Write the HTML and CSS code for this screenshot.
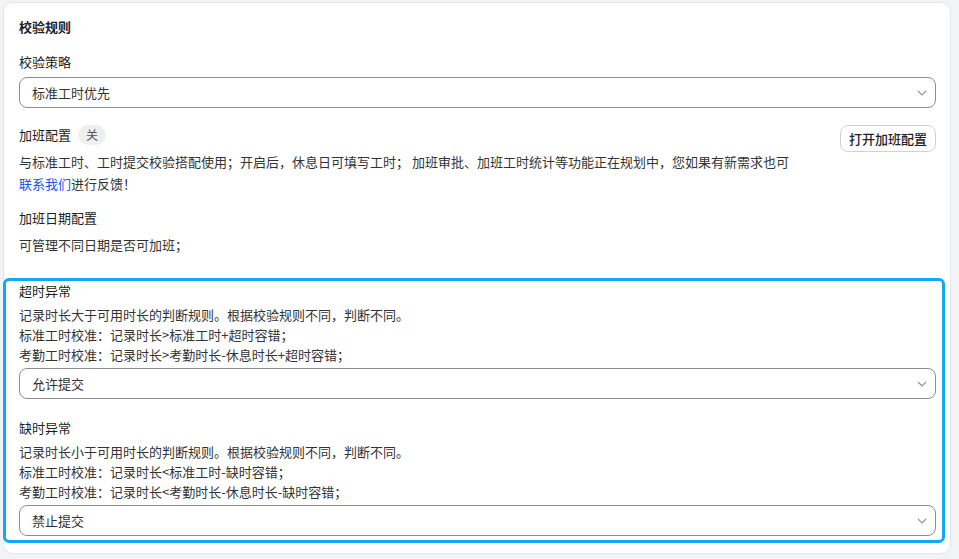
FILE: index.html
```html
<!DOCTYPE html>
<html lang="zh-CN">
<head>
    <meta charset="UTF-8">
    <meta name="viewport" content="width=device-width, initial-scale=1.0">
    <title>校验规则</title>
    <link rel="stylesheet" href="styles.css">
</head>
<body>
    <div class="card">
        <h2 class="card-title">校验规则</h2>

        <div class="field">
            <div class="field-label">校验策略</div>
            <div class="select">
                <span>标准工时优先</span>
                <svg class="chevron" width="10" height="6" viewBox="0 0 10 6"><polyline points="1,1 5,5 9,1" fill="none" stroke="#8f959e" stroke-width="1.2"/></svg>
            </div>
        </div>

        <div class="overtime">
            <div class="overtime-main">
                <div class="field-label">加班配置 <span class="tag">关</span></div>
                <p class="desc">与标准工时、工时提交校验搭配使用；开启后，休息日可填写工时； 加班审批、加班工时统计等功能正在规划中，您如果有新需求也可<a href="#" class="link">联系我们</a>进行反馈！</p>
            </div>
            <button class="btn">打开加班配置</button>
        </div>

        <div class="field-label date-label">加班日期配置</div>
        <p class="desc">可管理不同日期是否可加班；</p>

        <div class="highlight">
            <div class="rule">
                <div class="field-label">超时异常</div>
                <div class="rule-text">
                    <div>记录时长大于可用时长的判断规则。根据校验规则不同，判断不同。</div>
                    <div>标准工时校准：记录时长&gt;标准工时+超时容错；</div>
                    <div>考勤工时校准：记录时长&gt;考勤时长-休息时长+超时容错；</div>
                </div>
                <div class="select">
                    <span>允许提交</span>
                    <svg class="chevron" width="10" height="6" viewBox="0 0 10 6"><polyline points="1,1 5,5 9,1" fill="none" stroke="#8f959e" stroke-width="1.2"/></svg>
                </div>
            </div>
            <div class="rule">
                <div class="field-label">缺时异常</div>
                <div class="rule-text">
                    <div>记录时长小于可用时长的判断规则。根据校验规则不同，判断不同。</div>
                    <div>标准工时校准：记录时长&lt;标准工时-缺时容错；</div>
                    <div>考勤工时校准：记录时长&lt;考勤时长-休息时长-缺时容错；</div>
                </div>
                <div class="select">
                    <span>禁止提交</span>
                    <svg class="chevron" width="10" height="6" viewBox="0 0 10 6"><polyline points="1,1 5,5 9,1" fill="none" stroke="#8f959e" stroke-width="1.2"/></svg>
                </div>
            </div>
        </div>
    </div>
</body>
</html>
```

FILE: styles.css
```css
body {
    margin: 0;
    padding: 2px 8px 6px 3px;
    background-color: #f2f3f5;
    font-family: "Noto Sans CJK SC", "Noto Sans", sans-serif;
    font-size: 13px;
    color: #1f2329;
}
.card {
    background: white;
    border: 1px solid #e4e6e9;
    border-radius: 10px;
    padding: 14px 14px 10px 15px;
}
.card-title {
    margin: 0;
    font-size: 13px;
    font-weight: 600;
    line-height: 20px;
}
.field {
    margin-top: 15px;
}
.field-label {
    font-weight: 400;
    line-height: 20px;
    color: #1a1d21;
}
.select {
    display: flex;
    align-items: center;
    justify-content: space-between;
    height: 31px;
    box-sizing: border-box;
    border: 1px solid #8a8d92;
    border-radius: 8px;
    padding: 0 8px 0 12px;
    margin-top: 5px;
    color: #333;
}
.chevron {
    display: block;
}
.overtime {
    display: flex;
    align-items: flex-start;
    margin-top: 17px;
}
.overtime-main {
    flex: 1;
    margin-right: 42px;
}
.tag {
    display: inline-block;
    background-color: #eeeff1;
    color: #555;
    font-size: 12px;
    line-height: 20px;
    padding: 0 8px;
    border-radius: 10px;
    margin-left: 4px;
}
.desc {
    margin: 6px 0 0;
    line-height: 22px;
    color: #333;
}
.link {
    color: #1456f0;
    text-decoration: none;
}
.btn {
    font-family: inherit;
    font-size: 13px;
    font-weight: 500;
    color: #1f2329;
    background: white;
    border: 1px solid #d0d3d6;
    border-radius: 8px;
    height: 27px;
    padding: 0 8px;
}
.date-label {
    margin-top: 13px;
}
.highlight {
    margin: 22px -9px 0 -16px;
    padding: 0 6px 4px 13px;
    border: 3px solid #12a8f7;
    border-radius: 6px;
}
.rule + .rule {
    margin-top: 19px;
}
.rule-text {
    margin-top: 4px;
    line-height: 20px;
    color: #333;
}
.rule .select {
    margin-top: 3px;
}
```
